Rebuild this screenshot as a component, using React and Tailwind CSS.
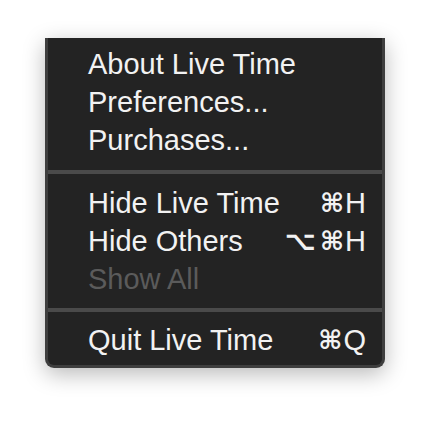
import React from 'react';

const Item = ({ label, shortcut, disabled }) => (
  <div className="flex h-[38px] items-center justify-between leading-[38px]">
    <span className={disabled ? 'text-[#5b5b5b]' : 'text-[#f2f2f2]'}>{label}</span>
    {shortcut && (
      <span className="flex items-center gap-[1px] text-[#f2f2f2]">
        {shortcut.map((s, i) => (
          <span
            key={i}
            className={
              s === 'H' || s === 'Q'
                ? ''
                : s === '⌥'
                  ? "mr-[3px] font-['DejaVu_Sans',sans-serif] text-[27px] font-bold"
                  : "font-['DejaVu_Sans',sans-serif] text-[26px] font-bold"
            }
          >
            {s}
          </span>
        ))}
      </span>
    )}
  </div>
);

const Separator = ({ className }) => <div className={`h-1 bg-[#4a4a4a] ${className}`} />;

const App = () => {
  return (
    <div className="h-[422px] w-[430px] bg-white font-['Liberation_Sans',Arial,sans-serif] text-[29px]">
      <div className="pl-[45px] pt-[38px]">
        <div className="w-[340px] rounded-b-[9px] border-x-[3px] border-b-[3px] border-[#3e3e3e] bg-[#232323] pt-[7px] pb-[6px] shadow-[0_6px_22px_rgba(0,0,0,0.28)]">
          <div className="pl-[40px] pr-[16px]">
            <Item label="About Live Time" />
            <Item label="Preferences..." />
            <Item label="Purchases..." />
          </div>
          <Separator className="mt-[11px] mb-[10px]" />
          <div className="pl-[40px] pr-[16px]">
            <Item label="Hide Live Time" shortcut={['⌘', 'H']} />
            <Item label="Hide Others" shortcut={['⌥', '⌘', 'H']} />
            <Item label="Show All" disabled />
          </div>
          <Separator className="mt-[10px] mb-[9px]" />
          <div className="pl-[40px] pr-[16px]">
            <Item label="Quit Live Time" shortcut={['⌘', 'Q']} />
          </div>
        </div>
      </div>
    </div>
  );
};

export default App;
